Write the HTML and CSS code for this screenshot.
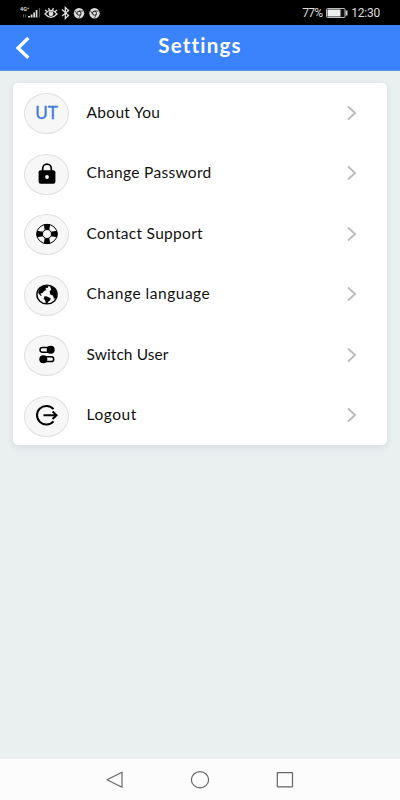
FILE: index.html
```
<!DOCTYPE html>
<html lang="en">
<head>
<meta charset="utf-8">
<title>Settings</title>
<link rel="stylesheet" href="styles.css">
</head>
<body>
<div class="status">
  <svg class="status-icons" width="84" height="18" viewBox="0 0 84 18">
    <text class="net" x="0" y="6.800">4G⁺</text>
    <path fill="#555" d="M3 10.500h1v3H3zM5 10.500h1v3H5z"/>
    <path fill="#ddd" d="M8 12h2v1.500H8zM10.700 10.500h1.800v3h-1.800zM13.300 8.500h1.700v5h-1.700zM15.700 6h1.700v7.500h-1.700z"/>
    <path fill="#555" d="M18.800 4H20v9.500h-1.200z"/>
    <g fill="none" stroke="#ddd" stroke-width="1.300">
      <path d="M25 10q6-7.200 12 0q-6 6.600-12 0zM25 6l2.300 1.800M28.600 4l.8 2M33.400 4l-.8 2M37 6l-2.300 1.800"/>
      <circle cx="31" cy="9.800" r="1.800" fill="#ddd"/>
      <path d="M42 5.500l6.500 6-3.200 3v-11l3.200 3-6.500 5.500"/>
    </g>
    <g id="browser">
      <circle cx="59" cy="9.200" r="5.200" fill="#ddd"/>
      <circle cx="59" cy="9.200" r="2" fill="#ddd" stroke="#222" stroke-width="1"/>
      <path d="M59 7h4.300M57 10.100l-2.200-3.500M61 10.200l-2 3.700" stroke="#222" stroke-width=".8"/>
    </g>
    <use href="#browser" x="15.500"/>
  </svg>
  <div class="status-right">
    <span class="percent">77%</span>
    <svg width="22" height="10" viewBox="0 0 22 10"><rect x=".5" y=".5" width="18.500" height="9" rx="1" fill="#111" stroke="#bbb"/><path d="M1.500 1.500h13v7h-13z" fill="#eee"/><path d="M19.500 2.500h2v5h-2z" fill="#ccc"/></svg>
    <span class="clock">12:30</span>
  </div>
</div>
<header class="bar">
  <svg class="back" width="16" height="24" viewBox="0 0 16 24"><path d="M13.300 2L3 12l10.300 9.800" fill="none" stroke="#fff" stroke-width="3.300"/></svg>
  <h1>Settings</h1>
</header>
<main>
  <ul class="card">
    <li><span class="disc initials">UT</span><span class="label l1">About You</span><svg class="chev" viewBox="0 0 10 16"><path d="M1 1.500l7 6.500-7 6.500"/></svg></li>
    <li><span class="disc"><svg width="24" height="24" viewBox="0 0 24 24"><path d="M7.700 9V6.500a4.300 4.300 0 0 1 8.600 0V9" fill="none" stroke="#000" stroke-width="1.700"/><rect x="3.600" y="8.200" width="16.800" height="13.600" rx="2"/><circle cx="12" cy="15" r="1.900" fill="#f7f7f7"/></svg></span><span class="label l2">Change Password</span><svg class="chev" viewBox="0 0 10 16"><path d="M1 1.500l7 6.500-7 6.500"/></svg></li>
    <li><span class="disc"><svg width="24" height="24" viewBox="0 0 24 24"><ellipse cx="12" cy="12" rx="10.300" ry="9.700" fill="#f7f7f7" stroke="#000" stroke-width="1"/><path d="M8.800 2.500q3.200-1 6.400 0L14.300 8H9.700zM8.800 21.500q3.200 1 6.400 0L14.300 16H9.700zM2 8.800q-1 3.200 0 6.400L8 14.300V9.700zM22 8.800q1 3.200 0 6.400L16 14.300V9.700z"/><circle cx="12" cy="12" r="4.500" fill="#f7f7f7" stroke="#000" stroke-width="1"/></svg></span><span class="label l3">Contact Support</span><svg class="chev" viewBox="0 0 10 16"><path d="M1 1.500l7 6.500-7 6.500"/></svg></li>
    <li><span class="disc"><svg width="24" height="24" viewBox="0 0 24 24"><ellipse cx="12" cy="11.500" rx="10.100" ry="9.400" fill="none" stroke="#000" stroke-width="1.400"/><path d="M3.800 7Q6.500 3 11 2.200l2.400 1-.8 1.800-1.800-.3-.3 1.500 1 .9-2.500.9L7.600 10l-2.200.4 1.400 2.500-1.600-.5-2-2.600zM14.800 2.800q4.200 1 6 4.800 1.800 4-.1 8.200l-1.800-.3-1-3-2.600-1-.7-3 1.700-2zM9.500 13.300l2.600.1 3.700 2-.9 2.200-2 1.500-.5 2-1.600-.4-.5-3-1.700-2.200z"/></svg></span><span class="label l4">Change language</span><svg class="chev" viewBox="0 0 10 16"><path d="M1 1.500l7 6.500-7 6.500"/></svg></li>
    <li><span class="disc"><svg width="24" height="24" viewBox="0 0 24 24"><g fill="none" stroke="#000" stroke-width="1.500"><rect x="5" y="4.400" width="13" height="4.800" rx="2.400"/><rect x="5.700" y="13.800" width="13" height="4.800" rx="2.400"/></g><circle cx="15.700" cy="6.800" r="4"/><circle cx="8.300" cy="16.200" r="4"/></svg></span><span class="label l5">Switch User</span><svg class="chev" viewBox="0 0 10 16"><path d="M1 1.500l7 6.500-7 6.500"/></svg></li>
    <li><span class="disc"><svg width="24" height="24" viewBox="0 0 24 24"><g fill="none" stroke="#000" stroke-width="2"><path d="M18.500 5.200A9.400 9.200 0 1 0 18.500 17.300"/><path d="M8.500 11.200h13M17.600 7.500l3.900 3.700-3.900 3.700"/></g></svg></span><span class="label l6">Logout</span><svg class="chev" viewBox="0 0 10 16"><path d="M1 1.500l7 6.500-7 6.500"/></svg></li>
  </ul>
</main>
<nav>
  <svg width="190" height="20" viewBox="0 0 190 20" fill="none" stroke="#666" stroke-width="1.200"><path d="M17 2.200v15L2 9.700z" stroke-linejoin="round"/><ellipse cx="95" cy="9.700" rx="8.600" ry="8.100"/><rect x="172.300" y="2.600" width="15.200" height="14.200" rx=".5"/></svg>
</nav>
</body>
</html>
```
FILE: styles.css
```
* { box-sizing: border-box; }
body {
  margin: 0;
  height: 800px;
  display: flex;
  flex-direction: column;
  background: #eaeff0;
  font-family: Lato, sans-serif;
  overflow: hidden;
}
.status {
  height: 25px;
  background: #000;
  display: flex;
  align-items: center;
  justify-content: space-between;
  padding: 0 20px;
  color: #ddd;
  font: 12px/18px Roboto, sans-serif;
}
.net { font: bold 5.5px Roboto, sans-serif; fill: #ddd; }
.status-right { display: flex; align-items: center; gap: 3.5px; padding-top: 1px; }
.percent { letter-spacing: -.7px; }
.clock { letter-spacing: -.25px; }
.bar {
  height: 46px;
  background: #3a83fd;
  border-bottom: 1px solid #5c94e8;
  display: grid;
  grid-template-columns: 44px 1fr 44px;
  align-items: center;
  color: #fff;
}
.back { margin-left: 15px; }
h1 {
  margin: 0 0 6px;
  font-size: 20.5px;
  line-height: 24px;
  letter-spacing: 1.2px;
  text-align: center;
}
main { flex: 1; padding: 12px 14px; }
.card {
  list-style: none;
  margin: 0 0 0 -1px;
  padding: 0;
  width: 374px;
  height: 362px;
  background: #fff;
  border-radius: 5px;
  box-shadow: 0 2px 6px rgba(90, 110, 110, .14);
}
li {
  height: 60.5px;
  display: flex;
  align-items: center;
  padding: 0 30px 0 11px;
}
.disc {
  width: 45px;
  height: 41px;
  margin: 1px 17.5px 0 0;
  display: flex;
  align-items: center;
  justify-content: center;
  background: #f7f7f7;
  border: 1px solid #dedfe0;
  border-radius: 50%;
}
.disc svg { margin-top: -1px; }
.initials { color: #3979e0; font-size: 17px; padding-bottom: 3px; -webkit-text-stroke: .3px #3979e0; }
.label { flex: 1; color: #111; font-size: 15.5px; line-height: 20px; letter-spacing: .4px; margin-top: -3px; }
.l1 { letter-spacing: .32px; }
.l2 { letter-spacing: .3px; }
.l3 { letter-spacing: .3px; }
.l4 { letter-spacing: .52px; }
.l5 { letter-spacing: .08px; }
.l6 { letter-spacing: .56px; }
.chev { width: 10px; height: 16px; fill: none; stroke: #bcbcbc; stroke-width: 1.9; margin-top: -1px; }
nav {
  height: 41px;
  background: #fcfcfc;
  display: flex;
  align-items: center;
  justify-content: center;
}
```
